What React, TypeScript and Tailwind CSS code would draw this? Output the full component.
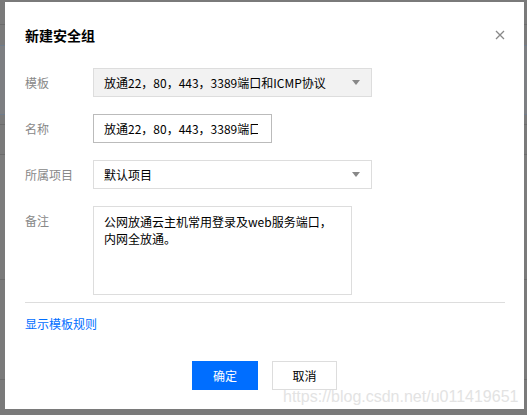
import { useState } from 'react'

const font = { fontFamily: '"Noto Sans CJK SC", "Liberation Sans", sans-serif' }

function Caret() {
  return (
    <svg width="8" height="5" viewBox="0 0 8 5" className="shrink-0">
      <path d="M0 0 L8 0 L4 5 Z" fill="#888" />
    </svg>
  )
}

function Row({ label, children, top }: { label: string; children: React.ReactNode; top?: boolean }) {
  return (
    <div className={`flex ${top ? 'items-start' : 'items-center'}`}>
      <div className={`w-[68px] shrink-0 text-[12px] leading-[17px] text-[#888] ${top ? 'pt-[6px]' : ''}`}>{label}</div>
      {children}
    </div>
  )
}

export default function App() {
  const [name] = useState('放通22，80，443，3389端口')

  return (
    <div className="relative w-[527px] h-[415px] overflow-hidden bg-[#7a7a7a]" style={font}>
      {/* dimmed page behind the modal */}
      <div className="flex flex-col">
        <div className="h-[25px] border-b border-[#6c6c6c]" />
        <div className="h-[20px]" />
        <div className="h-[70px] border-y border-[#6e7c8c] bg-[#7d7f82]" />
        <div className="h-[10px] border-b border-[#6c6c6c]" />
        <div className="h-[30px] border-b border-[#6c6c6c]" />
        <div className="h-[75px] bg-[#7c7c7c]" />
        <div className="h-[50px] border-b border-[#6c6c6c]" />
        <div className="h-[100px] border-b border-[#6c6c6c]" />
      </div>

      {/* modal */}
      <div className="absolute left-[5px] top-[2px] w-[519px] h-[407px] bg-white px-[20px] pt-[23px]">
        <div className="flex items-center justify-between h-[20px]">
          <div className="text-[14px] font-bold text-black leading-[20px]">新建安全组</div>
          <svg width="10" height="10" viewBox="0 0 10 10" className="mr-[-1px]">
            <path d="M1 1 L9 9 M9 1 L1 9" stroke="#888" strokeWidth="1.3" />
          </svg>
        </div>

        <div className="mt-[23px] flex flex-col gap-[17px]">
          <Row label="模板">
            <div className="w-[279px] h-[29px] flex items-center justify-between border border-[#ddd] bg-[#f2f2f2] pl-[10px] pr-[11px]">
              <span className="text-[12px] text-[#000] whitespace-nowrap">放通22，80，443，3389端口和ICMP协议</span>
              <Caret />
            </div>
          </Row>

          <Row label="名称">
            <div className="w-[179px] h-[29px] flex items-center border border-[#bbb] bg-white pl-[10px] pr-[13px]">
              <div className="min-w-0 overflow-hidden whitespace-nowrap text-[12px] text-[#000]">{name}</div>
            </div>
          </Row>

          <Row label="所属项目">
            <div className="w-[279px] h-[29px] flex items-center justify-between border border-[#ddd] bg-white pl-[10px] pr-[11px]">
              <span className="text-[12px] text-[#000]">默认项目</span>
              <Caret />
            </div>
          </Row>

          <Row label="备注" top>
            <div className="w-[259px] h-[89px] border border-[#ddd] bg-white pl-[10px] pr-[10px] pt-[6px] text-[12px] leading-[17px] text-[#000]">
              公网放通云主机常用登录及web服务端口，
              <br />
              内网全放通。
            </div>
          </Row>
        </div>

        <div className="mt-[7px] h-px bg-[#ddd] w-[480px]" />

        <div className="mt-[12px] text-[12px] leading-[17px] text-[#006eff]">显示模板规则</div>

        <div className="mt-[29px] flex justify-center gap-[14px]">
          <button className="w-[66px] h-[29px] bg-[#006eff] text-white text-[12px]">确定</button>
          <button className="w-[65px] h-[29px] bg-white border border-[#ddd] text-black text-[12px]">取消</button>
        </div>
      </div>

      {/* watermark */}
      <div
        className="absolute left-[283px] top-[387px] text-[16px] leading-[20px] text-[#e3e3e3] whitespace-nowrap"
        style={{ fontFamily: '"Liberation Sans", Arial, sans-serif' }}
      >
        https://blog.csdn.net/u011419651
      </div>
    </div>
  )
}
